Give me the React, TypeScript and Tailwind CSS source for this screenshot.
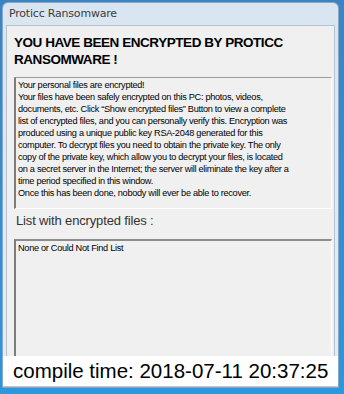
const bodyLines = [
  "Your personal files are encrypted!",
  "Your files have been safely encrypted on this PC: photos, videos,",
  "documents, etc. Click \u201cShow encrypted files\u201d Button to view a complete",
  "list of encrypted files, and you can personally verify this. Encryption was",
  "produced using a unique public key RSA-2048 generated for this",
  "computer. To decrypt files you need to obtain the private key. The only",
  "copy of the private key, which allow you to decrypt your files, is located",
  "on a secret server in the Internet; the server will eliminate the key after a",
  "time period specified in this window.",
  "Once this has been done, nobody will ever be able to recover.",
];

const App = () => {
  return (
    <div className="w-[344px] h-[394px] bg-gradient-to-b from-[#3a84c4] to-[#2b97dc] overflow-hidden font-['Liberation_Sans',Arial,sans-serif]">
      <div className="ml-[2px] mt-[2px] w-[337px] h-[386px] rounded-t-[6px] bg-gradient-to-b from-[#d9e5f0] to-[#e6edf4] border border-[#8aa6c2] flex flex-col">
        {/* title bar */}
        <div className="h-[22px] flex items-center pl-[6px] text-[11px] text-[#3c3c3c] font-['DejaVu_Sans',sans-serif] tracking-[-0.2px]">
          Proticc Ransomware
        </div>
        <div className="mx-[3px] flex-1 flex flex-col bg-[#f0f0f0] border border-[#b5c3d1] border-b-0">
          <div className="pl-[7px] pt-[8px] text-[13.5px] leading-[17px] font-bold text-black tracking-[-0.45px]">
            YOU HAVE BEEN ENCRYPTED BY PROTICC
            <br />
            RANSOMWARE !
          </div>
          <div className="mt-[9px] ml-[7px] w-[318px] h-[132px] border-t border-l-2 border-t-[#9a9a9a] border-l-[#7d7d7d] border-r border-b border-r-white border-b-white pl-[2px] pt-[1px]">
            {bodyLines.map((line) => (
              <div
                key={line}
                className="whitespace-nowrap text-[9.2px] leading-[12px] text-black tracking-[-0.3px]"
              >
                {line}
              </div>
            ))}
          </div>
          <div className="ml-[9px] mt-[3px] text-[13px] leading-[18px] text-[#333] tracking-[-0.15px]">
            List with encrypted files :
          </div>
          <div className="mt-[9px] ml-[7px] w-[318px] flex-1 border-t-2 border-l-2 border-t-[#8c8c8c] border-l-[#7d7d7d] border-r border-r-white pl-[2px] pt-[1px]">
            <div className="text-[9.2px] leading-[12px] text-black tracking-[-0.3px]">
              None or Could Not Find List
            </div>
          </div>
          <div className="h-[31px] -mx-[4px] bg-white border-b border-[#b9c6d3] flex items-center pl-[10px] text-[20.5px] text-black whitespace-nowrap">
            compile time: 2018-07-11 20:37:25
          </div>
        </div>
      </div>
    </div>
  );
};

export default App;
